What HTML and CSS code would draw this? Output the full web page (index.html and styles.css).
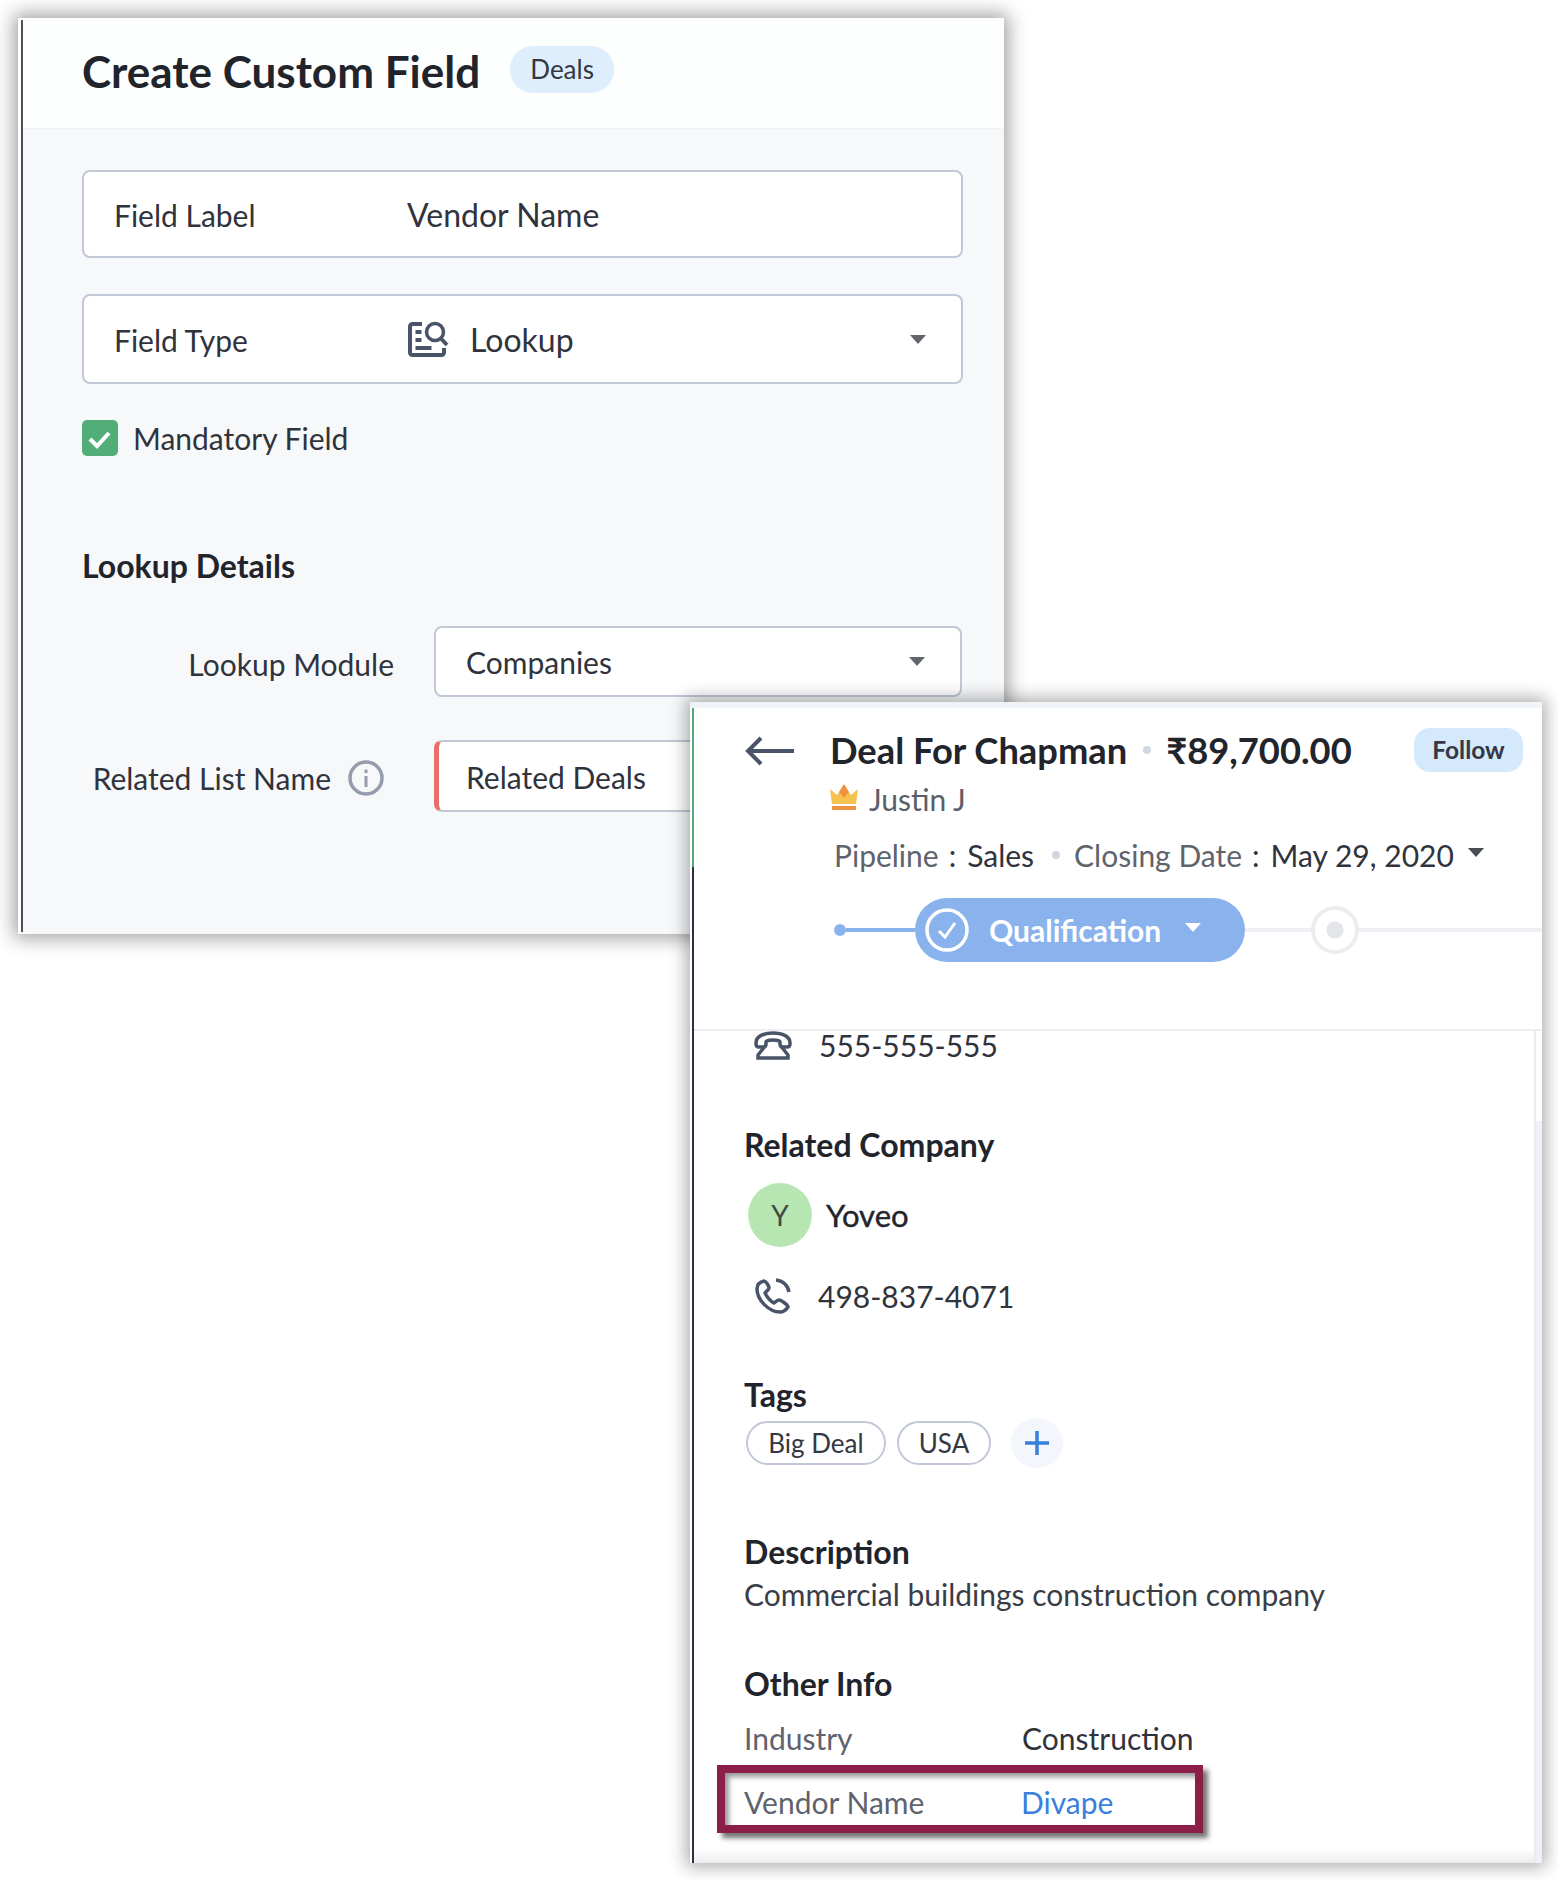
FILE: index.html
```html
<!DOCTYPE html>
<html lang="en">
<head>
<meta charset="utf-8">
<title>Create Custom Field</title>
<link rel="stylesheet" href="styles.css">
</head>
<body>
<main class="desk">
  <section class="window create">
    <header class="create-head">
      <h1 class="create-title">Create Custom Field</h1>
      <span class="module-pill">Deals</span>
    </header>
    <div class="create-body">
      <div class="field field-label">
        <span class="field-name">Field Label</span>
        <span class="field-value">Vendor Name</span>
      </div>
      <div class="field field-type">
        <span class="field-name">Field Type</span>
        <svg class="icon-lookup" viewBox="0 0 42 37" aria-hidden="true">
          <path d="M15 3H5.500A2.500 2.500 0 0 0 3 5.500V31.500A2.500 2.500 0 0 0 5.500 34H34.500A2.500 2.500 0 0 0 37 31.500V27" fill="none" stroke="#4a5468" stroke-width="4"/>
          <rect x="8.500" y="9" width="6" height="4" fill="#4a5468"/>
          <rect x="8.500" y="17" width="6" height="4" fill="#4a5468"/>
          <rect x="8.500" y="25" width="16" height="4" fill="#4a5468"/>
          <circle cx="28" cy="11" r="8.500" fill="none" stroke="#4a5468" stroke-width="3.500"/>
          <path d="M34 17.500L40 24" stroke="#4a5468" stroke-width="4" fill="none"/>
        </svg>
        <span class="field-value-icon">Lookup</span>
        <span class="caret"></span>
      </div>
      <label class="check-row">
        <span class="check">
          <svg viewBox="0 0 36 36" aria-hidden="true"><path d="M8 19L15 26L27 13" fill="none" stroke="#fff" stroke-width="4"/></svg>
        </span>
        <span class="check-text">Mandatory Field</span>
      </label>
      <h2 class="details-title">Lookup Details</h2>
      <div class="detail-grid">
        <span class="detail-label">Lookup Module</span>
        <div class="select select-module"><span>Companies</span><span class="caret"></span></div>
        <span class="detail-label detail-label-info">Related List Name
          <svg class="icon-info" viewBox="0 0 36 36" aria-hidden="true">
            <circle cx="18" cy="18" r="16" fill="none" stroke="#959cac" stroke-width="3.500"/>
            <rect x="16.500" y="16" width="3" height="11" fill="#959cac"/>
            <rect x="16.500" y="9.500" width="3" height="3.500" fill="#959cac"/>
          </svg>
        </span>
        <div class="select select-required"><span>Related Deals</span></div>
      </div>
    </div>
  </section>

  <section class="window deal">
    <div class="deal-strip"></div>
    <div class="deal-inner">
      <header class="deal-head">
        <div class="title-row">
          <svg class="icon-back" viewBox="0 0 50 32" aria-hidden="true"><path d="M50 16H4M17 3L4 16L17 29" fill="none" stroke="#4a5468" stroke-width="4"/></svg>
          <h1 class="deal-title">Deal For Chapman</h1>
          <span class="dot dot-title"></span>
          <span class="deal-amount">₹89,700.00</span>
          <span class="follow">Follow</span>
        </div>
        <div class="owner-row">
          <svg class="icon-crown" viewBox="0 0 28 26" aria-hidden="true">
            <path d="M0 5L7 11L14 1L21 11L28 5L26 20H2Z" fill="#f5c24f"/>
            <path d="M14 0L19 8L14 14L9 8Z" fill="#ef9340"/>
            <rect x="2" y="22" width="24" height="4" fill="#ef9340"/>
          </svg>
          <span class="owner">Justin J</span>
        </div>
        <div class="meta-row">
          <span class="meta-key">Pipeline</span>
          <span class="meta-colon">:</span>
          <span class="meta-val">Sales</span>
          <span class="dot dot-meta"></span>
          <span class="meta-key">Closing Date</span>
          <span class="meta-colon">:</span>
          <span class="meta-val">May 29, 2020</span>
          <span class="caret caret-meta"></span>
        </div>
        <div class="stage-row">
          <span class="stage-start"></span>
          <span class="stage-done"></span>
          <div class="stage-pill">
            <svg class="icon-stage" viewBox="0 0 44 44" aria-hidden="true">
              <circle cx="22" cy="22" r="20" fill="none" stroke="#fff" stroke-width="3.500"/>
              <path d="M14 23L20 29L30 15" fill="none" stroke="#fff" stroke-width="3"/>
            </svg>
            <span class="stage-name">Qualification</span>
            <span class="caret caret-stage"></span>
          </div>
          <span class="stage-todo stage-todo-a"></span>
          <span class="stage-ring"></span>
          <span class="stage-todo stage-todo-b"></span>
        </div>
      </header>
      <div class="deal-body">
        <div class="deal-content">
          <div class="contact-row contact-first">
            <svg class="icon-land" viewBox="0 0 38 29" aria-hidden="true">
              <path d="M2 12C2 5 10 2 19 2S36 5 36 12V13C36 15 35 16 33 16H29C27 16 26 15 26 13V11C26 9.500 23 9 19 9S12 9.500 12 11V13C12 15 11 16 9 16H5C3 16 2 15 2 13Z" fill="none" stroke="#4a5468" stroke-width="3.500"/>
              <path d="M12 14L4 24V27H34V24L26 14" fill="none" stroke="#4a5468" stroke-width="3.500"/>
            </svg>
            <span class="contact-text">555-555-555</span>
          </div>
          <h2 class="sub-title sub-company">Related Company</h2>
          <div class="company-row">
            <span class="avatar">Y</span>
            <span class="company-name">Yoveo</span>
          </div>
          <div class="contact-row contact-second">
            <svg class="icon-call" viewBox="0 0 36 36" aria-hidden="true">
              <path d="M9 3C5 4 2 7 2 11C2 22 14 34 25 34C28 34 31 32 33 29C33 27 26 22 24 22C22 22 21 24 19 25C15 23 12 19 10 15C11 13 14 12 14 10C14 8 11 3 9 3Z" fill="none" stroke="#4a5468" stroke-width="3.500"/>
              <path d="M21 2A14 14 0 0 1 34 14" fill="none" stroke="#4a5468" stroke-width="3.500"/>
            </svg>
            <span class="contact-text">498-837-4071</span>
          </div>
          <h2 class="sub-title sub-tags">Tags</h2>
          <div class="tag-row">
            <span class="tag tag-big">Big Deal</span>
            <span class="tag tag-usa">USA</span>
            <span class="tag-add">
              <svg viewBox="0 0 26 26" aria-hidden="true"><path d="M13 1V25M1 13H25" stroke="#3a7fdb" stroke-width="3.500" fill="none"/></svg>
            </span>
          </div>
          <h2 class="sub-title sub-desc">Description</h2>
          <p class="desc-text">Commercial buildings construction company</p>
          <h2 class="sub-title sub-other">Other Info</h2>
          <div class="info-row info-industry">
            <span class="info-key">Industry</span>
            <span class="info-val">Construction</span>
          </div>
          <div class="info-row info-vendor">
            <span class="info-key">Vendor Name</span>
            <span class="info-link">Divape</span>
          </div>
        </div>
        <div class="scroll-track"></div>
      </div>
    </div>
  </section>
</main>
</body>
</html>
```

FILE: styles.css
```css
* { box-sizing: border-box; }
html, body { margin: 0; padding: 0; background: #fff; }
body {
  width: 1558px;
  height: 1880px;
  overflow: hidden;
  font-family: Lato, "Open Sans", sans-serif;
  font-size: 30px;
  color: #272a33;
}
h1, h2, p { margin: 0; }
.desk { position: relative; width: 1558px; height: 1880px; }
.window { position: absolute; background: #fff; }

/* Create window */
.create {
  left: 18px; top: 18px; width: 986px; height: 916px;
  background: #f7f8fa;
  box-shadow: 0 0 18px 4px rgba(0,0,0,.38);
  border-left: 3px solid #fff;
  display: flex; flex-direction: column;
}
.create::before {
  content: ""; position: absolute; left: 0; top: 2px; bottom: 2px;
  width: 2px; background: #4b4f58;
}
.create-head {
  height: 111px; flex: none;
  padding-left: 61px;
  display: flex; align-items: center;
  background: #fdfefe;
  border-bottom: 1px solid #f0f2f5;
}
.create-title { font-size: 44px; font-weight: 700; line-height: 50px; color: #22242c; margin-top: -4px; }
.module-pill {
  width: 104px; height: 47px; margin-left: 30px; margin-top: -8px;
  border-radius: 23px; background: #deeefc;
  display: flex; align-items: center; justify-content: center;
  font-size: 26px; color: #333843;
}
.create-body { padding: 41px 41px 0 61px; }
.field {
  display: flex; align-items: center;
  background: #fff;
  border: 2px solid #c0c8d8; border-radius: 8px;
  padding: 0 35px 0 30px;
}
.field-label { height: 88px; }
.field-type { height: 90px; margin-top: 36px; }
.field-name { width: 293px; flex: none; padding-top: 2px; font-size: 30px; color: #30333c; }
.field-value { font-size: 32px; color: #30333c; }
.icon-lookup { width: 42px; height: 37px; flex: none; }
.field-value-icon { margin-left: 21px; padding-top: 1px; font-size: 32px; color: #30333c; }
.caret {
  width: 0; height: 0; flex: none;
  border-left: 8px solid transparent; border-right: 8px solid transparent;
  border-top: 9px solid #63656c;
}
.field .caret, .select .caret { margin-left: auto; }
.check-row { display: flex; align-items: center; margin-top: 36px; height: 36px; }
.check {
  width: 36px; height: 36px; flex: none; border-radius: 5px; background: #52ae78;
  display: flex;
}
.check svg { width: 36px; height: 36px; }
.check-text { margin-left: 15px; font-size: 30px; color: #30333c; }
.details-title { margin-top: 90px; font-size: 32px; font-weight: 700; line-height: 40px; color: #22242c; }
.detail-grid {
  display: grid; grid-template-columns: 312px 528px;
  column-gap: 40px; row-gap: 43px; margin-top: 40px;
}
.detail-label {
  display: flex; align-items: center; justify-content: flex-end;
  padding-top: 4px;
  font-size: 30px; color: #30333c;
}
.detail-label-info { padding-right: 10px; white-space: nowrap; }
.icon-info { width: 36px; height: 36px; margin-left: 17px; flex: none; }
.select {
  display: flex; align-items: center;
  background: #fff; border: 2px solid #c0c8d8; border-radius: 8px;
  padding: 0 35px 0 30px;
  font-size: 30px; color: #30333c;
}
.select-module { height: 71px; }
.select-required { height: 72px; border-left: 5px solid #e96f6b; padding: 2px 0 0 27px; }

/* Deal window */
.deal {
  left: 690px; top: 702px; width: 852px; height: 1161px;
  box-shadow: 0 0 16px 4px rgba(0,0,0,.32);
  display: flex; flex-direction: column;
}
.deal-strip { height: 6px; flex: none; background: #f0f3f7; }
.deal-inner {
  flex: 1; min-height: 0;
  margin-left: 2px; padding-left: 2px;
  display: flex; flex-direction: column;
  background: linear-gradient(#4dae7c 0 159px, #2b3040 159px) left top / 2px 100% no-repeat, #fff;
}
.deal-head { height: 321px; flex: none; padding-top: 18px; }
.title-row { display: flex; align-items: center; height: 48px; padding-left: 50px; }
.icon-back { width: 50px; height: 32px; flex: none; margin-top: 2px; }
.deal-title { margin-left: 36px; font-size: 36.300px; font-weight: 700; line-height: 48px; color: #22242c; }
.dot { flex: none; border-radius: 50%; background: #cfd7e3; width: 8px; height: 8px; }
.dot-title { margin-left: 16px; }
.deal-amount { margin-left: 15px; font-size: 36.300px; font-weight: 700; color: #22242c; }
.follow {
  position: absolute; left: 724px; top: 26px;
  width: 109px; height: 44px; border-radius: 16px; background: #d4e9fb;
  display: flex; align-items: center; justify-content: center;
  padding-bottom: 2px;
  font-size: 24.500px; font-weight: 700; color: #333843;
}
.owner-row { display: flex; align-items: center; height: 34px; margin-top: 8px; padding-left: 136px; }
.icon-crown { width: 28px; height: 26px; flex: none; margin-top: -4px; }
.owner { margin-left: 11px; font-size: 30px; color: #5a5e68; }
.meta-row { display: flex; align-items: center; height: 40px; margin-top: 19px; padding-left: 140px; }
.meta-key { font-size: 30px; color: #5f636d; }
.meta-colon { margin: 0 11px 0 10px; font-size: 30px; color: #30333c; }
.meta-val { font-size: 30px; color: #30333c; }
.dot-meta { margin: 0 14px 0 18px; }
.caret-meta { margin-left: 14px; margin-top: -6px; border-top-color: #4a4c54; }
.stage-row { display: flex; align-items: center; height: 64px; margin-top: 23px; padding-left: 140px; }
.stage-start { width: 12px; height: 12px; border-radius: 50%; background: #8ab3ee; flex: none; }
.stage-done { width: 69px; height: 4px; background: #8ab3ee; flex: none; }
.stage-pill {
  width: 330px; height: 64px; flex: none; border-radius: 32px; background: #8ab3ee;
  display: flex; align-items: center; padding-left: 10px;
}
.icon-stage { width: 44px; height: 44px; flex: none; }
.stage-name { margin-left: 20px; font-size: 30px; font-weight: 700; color: #fff; }
.caret-stage { margin-left: 24px; border-top-color: #fff; margin-top: -6px; }
.stage-todo { height: 4px; background: #eef0f3; flex: none; }
.stage-todo-a { width: 66px; }
.stage-ring { width: 48px; height: 48px; border-radius: 50%; border: 4px solid #ebedef; background: radial-gradient(circle, #e3e5e8 0 8px, #fff 9px); flex: none; }
.stage-todo-b { flex: 1; }
.deal-body { flex: 1; min-height: 0; display: flex; border-top: 2px solid #eceff3; }
.deal-content { flex: 1; min-width: 0; padding: 0 0 0 50px; position: relative; }
.deal-content::after {
  content: ""; position: absolute; left: 0; right: 0; bottom: 0; height: 14px;
  background: linear-gradient(rgba(0,0,0,0), rgba(0,0,0,.07));
}
.scroll-track {
  width: 8px; flex: none; border-left: 2px solid #e8ebf0;
  background: linear-gradient(#fff 0 90px, #eef1f6 90px);
}
.contact-row { display: flex; align-items: center; }
.contact-first { height: 28px; padding-left: 10px; }
.icon-land { width: 38px; height: 29px; flex: none; }
.contact-text { font-size: 30px; color: #30333c; margin-left: 27px; }
.sub-title { font-size: 32px; font-weight: 700; line-height: 40px; color: #22242c; }
.sub-company { margin-top: 66px; }
.company-row { display: flex; align-items: center; margin-top: 18px; padding-left: 4px; }
.avatar {
  width: 64px; height: 64px; border-radius: 50%; background: #b8e6b2;
  display: flex; align-items: center; justify-content: center;
  font-size: 28px; color: #3f4a44;
}
.company-name { margin-left: 14px; font-size: 31px; -webkit-text-stroke: 0.4px #22242c; color: #22242c; }
.contact-second { margin-top: 32px; height: 34px; padding-left: 11px; }
.icon-call { width: 36px; height: 36px; flex: none; margin-right: -1px; }
.contact-second .contact-text { margin-left: 28px; }
.sub-tags { margin-top: 62px; }
.tag-row { display: flex; align-items: center; margin-top: 3px; padding-left: 2px; height: 50px; }
.tag {
  height: 44px; border-radius: 22px; background: #fff; border: 2px solid #c0c8d8;
  display: flex; align-items: center; justify-content: center;
  font-size: 26px; color: #333843; flex: none;
}
.tag-big { width: 140px; }
.tag-usa { width: 94px; margin-left: 11px; }
.tag-add {
  width: 52px; height: 50px; border-radius: 50%; background: #f3f6fa; margin-left: 20px;
  display: flex; align-items: center; justify-content: center; flex: none;
}
.tag-add svg { width: 26px; height: 26px; }
.sub-desc { margin-top: 64px; }
.desc-text { font-size: 30px; line-height: 40px; margin-top: 2px; color: #3a3d46; }
.sub-other { margin-top: 50px; }
.info-row { display: grid; grid-template-columns: 278px 1fr; }
.info-industry { margin-top: 14px; font-size: 30px; line-height: 40px; }
.info-key { color: #5f636d; font-size: 30px; }
.info-val { color: #30333c; font-size: 30px; }
.info-link { color: #3a7fdb; font-size: 30px; }
.info-vendor {
  position: absolute; left: 23px; top: 734px;
  width: 486px; height: 68px;
  border: 8px solid #8b1f4a;
  padding: 6px 0 0 19px; align-items: center; line-height: 40px;
  grid-template-columns: 277px 1fr;
  box-shadow: 5px 5px 5px rgba(0,0,0,.55), inset 4px 4px 5px rgba(0,0,0,.4);
}
```
